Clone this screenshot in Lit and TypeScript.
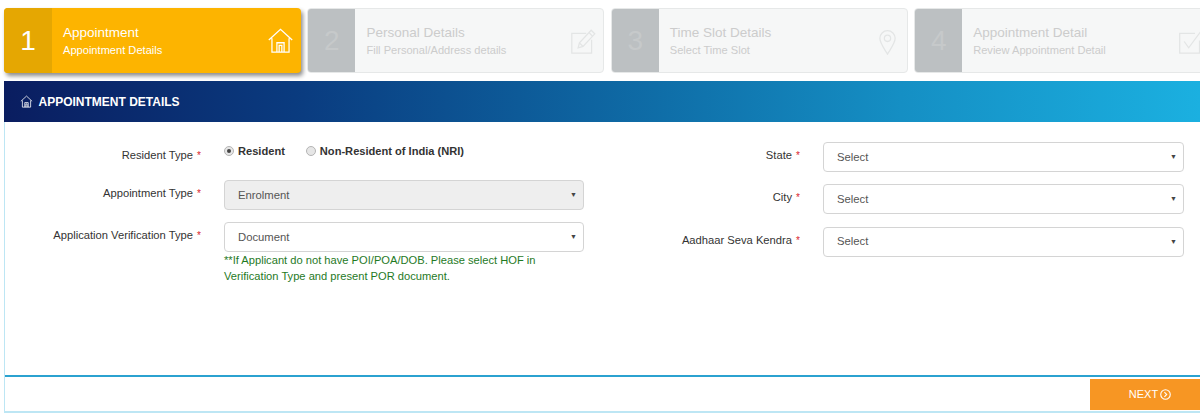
import { LitElement, html, css, svg } from 'lit';
import { customElement } from 'lit/decorators.js';

const icons = {
  home: svg`<path d="M2 14.5 15 2.5l13 12M5.5 12.5V28h19V12.5M11 28V17.5h8V28M13.5 28v-7.5h3V28"/>`,
  edit: svg`<path d="M24 13v15H2V6h16"/><path d="M9 22l1.5-5.5L23.5 2.5l4 4-13 14zM10.5 16.5l4 4M21 5l4 4"/>`,
  pin: svg`<path d="M15 29C10 21 6.5 16.500 6.500 11.500a8.500 8.500 0 0 1 17 0C23.500 16.500 20 21 15 29z"/><circle cx="15" cy="11.500" r="3.500"/>`,
  check: svg`<path d="M25 14v14H3V6h17"/><path d="M8 15l5 7L27 3"/>`,
};

const steps = [
  { n: 1, title: 'Appointment', sub: 'Appointment Details', icon: icons.home },
  { n: 2, title: 'Personal Details', sub: 'Fill Personal/Address details', icon: icons.edit },
  { n: 3, title: 'Time Slot Details', sub: 'Select Time Slot', icon: icons.pin },
  { n: 4, title: 'Appointment Detail', sub: 'Review Appointment Detail', icon: icons.check },
];

@customElement('app-root')
export class AppRoot extends LitElement {
  static styles = css`
    :host {
      display: block;
      width: 1200px;
      height: 414px;
      overflow: hidden;
      background: #fff;
      font-family: 'Liberation Sans', Arial, sans-serif;
      color: #333;
    }
    .steps {
      display: flex;
      gap: 6.4px;
      padding: 8px 0 0 4px;
      width: 1300px;
      height: 65px;
    }
    .step {
      flex: 0 0 297px;
      box-sizing: border-box;
      height: 65px;
      display: flex;
      align-items: stretch;
      border: 1px solid #e6e8e8;
      border-radius: 4px;
      background: #f6f7f7;
      color: #ccc;
      overflow: hidden;
    }
    .step.active {
      border: none;
      background: #fdb400;
      color: #fff;
      box-shadow: 2px 3px 4px rgba(0, 0, 0, 0.45);
      overflow: visible;
    }
    .num {
      flex: 0 0 47px;
      display: flex;
      align-items: center;
      justify-content: center;
      background: #bcc0c2;
      color: #c6c9ca;
      font-size: 28px;
    }
    .active .num {
      flex-basis: 48px;
      background: #e5a702;
      color: #fff;
      border-radius: 4px 0 0 4px;
    }
    .text {
      flex: 1;
      padding: 15px 0 0 11px;
    }
    .active .text { padding-top: 16px; }
    .title { font-size: 13.5px; line-height: 17px; }
    .sub { font-size: 11.100px; line-height: 15px; margin-top: 2px; }
    .step svg {
      width: 27px;
      height: 27px;
      margin: 19px 6px 0 0;
      fill: none;
      stroke: #e3e5e5;
      stroke-width: 1.4;
    }
    .step.active svg { stroke: #fff; stroke-width: 1.4; margin-right: 7px; }
    .panel {
      box-sizing: border-box;
      margin: 8px 0 0 4px;
      height: 332px;
      border: solid #bde6f4;
      border-width: 0 0 2px 1.500px;
      display: flex;
      flex-direction: column;
    }
    .head {
      height: 41px;
      flex: none;
      margin-left: -1.500px;
      display: flex;
      align-items: center;
      gap: 6px;
      padding-left: 16px;
      background: linear-gradient(90deg, #0a1d60 0%, #0a3c80 25%, #0f6ea8 55%, #158fc4 75%, #1bb0e0 100%);
      color: #fff;
      font-size: 12px;
      font-weight: bold;
    }
    .head svg {
      width: 13px;
      height: 13px;
      fill: none;
      stroke: #fff;
      stroke-width: 1.8;
    }
    .form {
      flex: 1;
      display: grid;
      grid-template-columns: 600px 1fr;
      padding-top: 20px;
      border-bottom: 2px solid #2ba2d0;
    }
    .col { display: flex; flex-direction: column; }
    .row {
      display: grid;
      column-gap: 23px;
      align-items: start;
    }
    .left .row { grid-template-columns: 196px 360px; }
    .right .row { grid-template-columns: 196px 361px; }
    .right { margin-left: -1px; }
    .left .row:first-child { height: 38px; }
    .left .row:nth-child(2) { height: 42px; }
    .right .row { height: 42.300px; }
    .label {
      text-align: right;
      font-size: 11.200px;
      line-height: 14px;
      padding-top: 6px;
      white-space: nowrap;
    }
    .req { color: #d9232d; font-size: 10px; margin-left: 1px; }
    .select {
      box-sizing: border-box;
      height: 30px;
      display: flex;
      align-items: center;
      justify-content: space-between;
      padding: 0 6px 1px 13px;
      border: 1px solid #d4d4d4;
      border-radius: 4px;
      background: #fff;
      color: #555;
      font-size: 11.300px;
    }
    .select.off { background: #eee; }
    .arrow { font-size: 7px; color: #444; }
    .radios {
      display: flex;
      align-items: center;
      gap: 21px;
      font-size: 11.100px;
      font-weight: bold;
      height: 16px;
      margin-top: 1px;
    }
    .radio { display: flex; align-items: center; gap: 4px; white-space: nowrap; }
    .dot {
      box-sizing: border-box;
      width: 10px;
      height: 10px;
      border-radius: 50%;
      border: 1px solid #b4b4b4;
      background: #e6e6e6;
      display: flex;
      align-items: center;
      justify-content: center;
    }
    .dot.on::after {
      content: '';
      width: 4px;
      height: 4px;
      border-radius: 50%;
      background: #444;
    }
    .hint {
      color: #1f7a1f;
      font-size: 11.150px;
      line-height: 16px;
    }
    .foot {
      flex: none;
      height: 34px;
      display: flex;
      justify-content: flex-end;
      padding-top: 2px;
      box-sizing: border-box;
    }
    .next {
      box-sizing: border-box;
      width: 110px;
      height: 30.500px;
      padding-left: 10px;
      background: #f79623;
      color: #fff;
      display: flex;
      align-items: center;
      justify-content: center;
      gap: 2px;
      font-size: 11px;
    }
    .next svg {
      width: 11px;
      height: 11px;
      fill: none;
      stroke: #fff;
      stroke-width: 1.2;
    }
  `;

  private _select(value: string, off = false) {
    return html`
      <div class="select ${off ? 'off' : ''}">
        <span>${value}</span><span class="arrow">▼</span>
      </div>
    `;
  }

  private _label(text: string) {
    return html`<div class="label">${text} <span class="req">*</span></div>`;
  }

  render() {
    return html`
      <div class="steps">
        ${steps.map(
          (s, i) => html`
            <div class="step ${i === 0 ? 'active' : ''}">
              <div class="num">${s.n}</div>
              <div class="text">
                <div class="title">${s.title}</div>
                <div class="sub">${s.sub}</div>
              </div>
              <svg viewBox="0 0 30 30">${s.icon}</svg>
            </div>
          `,
        )}
      </div>
      <div class="panel">
        <div class="head">
          <svg viewBox="0 0 30 30">${icons.home}</svg>
          <span>APPOINTMENT DETAILS</span>
        </div>
        <div class="form">
          <div class="col left">
            <div class="row">
              ${this._label('Resident Type')}
              <div class="radios">
                <label class="radio"><span class="dot on"></span>Resident</label>
                <label class="radio"><span class="dot"></span>Non-Resident of India (NRI)</label>
              </div>
            </div>
            <div class="row">
              ${this._label('Appointment Type')}
              ${this._select('Enrolment', true)}
            </div>
            <div class="row">
              ${this._label('Application Verification Type')}
              <div>
                ${this._select('Document')}
                <div class="hint">
                  **If Applicant do not have POI/POA/DOB. Please select HOF in<br />
                  Verification Type and present POR document.
                </div>
              </div>
            </div>
          </div>
          <div class="col right">
            <div class="row">${this._label('State')}${this._select('Select')}</div>
            <div class="row">${this._label('City')}${this._select('Select')}</div>
            <div class="row">${this._label('Aadhaar Seva Kendra')}${this._select('Select')}</div>
          </div>
        </div>
        <div class="foot">
          <div class="next">
            NEXT
            <svg viewBox="0 0 12 12"><circle cx="6" cy="6" r="5.200"/><path d="M4.800 3.500 7.300 6 4.800 8.500"/></svg>
          </div>
        </div>
      </div>
    `;
  }
}
